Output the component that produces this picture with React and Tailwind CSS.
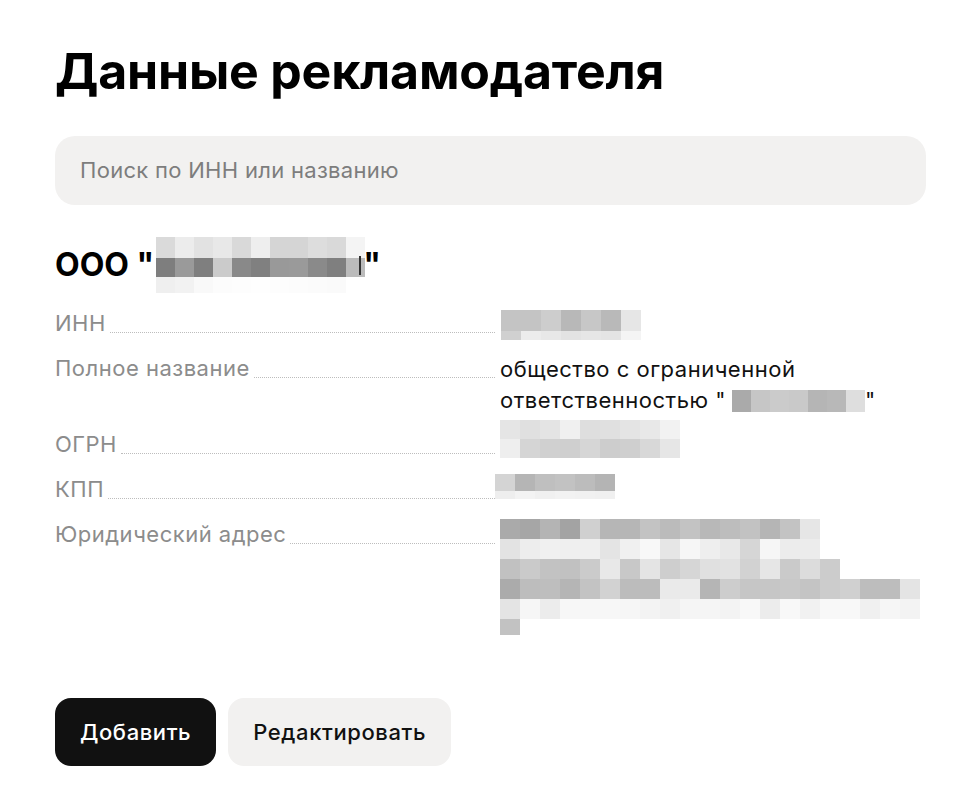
import React from 'react';

function Pixels({ rows, w = 20, className = '' }) {
  return (
    <div className={'inline-flex flex-col align-top ' + className}>
      {rows.map((r, i) => (
        <div key={i} className="flex" style={{ height: r.h }}>
          {r.c.map((c, j) => (
            <div key={j} style={{ width: w, background: c }} />
          ))}
        </div>
      ))}
    </div>
  );
}

const ooo = [
  { h: 21, c: ['#dadada', '#ececec', '#e2e2e2', '#e8e8e8', '#d9d9d9', '#eeeeee', '#d5d5d5', '#d5d5d5', '#dddddd', '#d9d9d9', '#f4f4f4'] },
  { h: 19, c: ['#7e7e7e', '#9a9a9a', '#7f7f7f', '#cbcbcb', '#898989', '#808080', '#999999', '#9a9a9a', '#8a8a8a', '#7f7f7f', '#bbbbbb'] },
  { h: 16, c: ['#efefef', '#f2f2f2', '#f9f9f9', '#fcfcfc', '#fdfdfd', '#fefefe', '#fdfdfd', '#fcfcfc', '#fbfbfb', '#fafafa', '#ffffff'] },
];

const inn = [
  { h: 21, c: ['#c4c4c4', '#c4c4c4', '#cdcdcd', '#b8b8b8', '#c7c7c7', '#b9b9b9', '#e6e6e6'] },
  { h: 9, c: ['#d0d0d0', '#ececec', '#e8e8e8', '#e3e3e3', '#e6e6e6', '#e4e4e4', '#f4f4f4'] },
];

const ogrn = [
  { h: 19, c: ['#e5e5e5', '#e0e0e0', '#e4e4e4', '#f0f0f0', '#dedede', '#e0e0e0', '#e4e4e4', '#e8e8e8', '#f2f2f2'] },
  { h: 19, c: ['#eeeeee', '#d5d5d5', '#d0d0d0', '#cfcfcf', '#d6d6d6', '#cdcdcd', '#cfcfcf', '#d8d8d8', '#e6e6e6'] },
];

const kpp = [
  { h: 17, c: ['#d4d4d4', '#b5b5b5', '#bfbfbf', '#c2c2c2', '#bcbcbc', '#b4b4b4'] },
  { h: 8, c: ['#eeeeee', '#f3f3f3', '#f0f0f0', '#f2f2f2', '#f1f1f1', '#f0f0f0'] },
];

const name = [
  { h: 22, c: ['#aaaaaa', '#c6c6c6', '#cbcbcb', '#c9c9c9', '#b5b5b5', '#b8b8b8', '#dedede'] },
];

const addr = [
  { h: 20, c: ['#aaaaaa', '#a6a6a6', '#b4b4b4', '#a3a3a3', '#d0d0d0', '#b6b6b6', '#b6b6b6', '#c3c3c3', '#bbbbbb', '#c3c3c3', '#b8b8b8', '#bdbdbd', '#c2c2c2', '#b5b5b5', '#c3c3c3', '#e6e6e6', '#ffffff', '#ffffff', '#ffffff', '#ffffff', '#ffffff'] },
  { h: 20, c: ['#e3e3e3', '#ededed', '#f0f0f0', '#efefef', '#efefef', '#e4e4e4', '#f0f0f0', '#f8f8f8', '#e6e6e6', '#f6f6f6', '#eeeeee', '#e8e8e8', '#d6d6d6', '#f6f6f6', '#ececec', '#ececec', '#ffffff', '#ffffff', '#ffffff', '#ffffff', '#ffffff'] },
  { h: 20, c: ['#c1c1c1', '#cacaca', '#c2c2c2', '#c1c1c1', '#cbcbcb', '#e8e8e8', '#c8c8c8', '#e4e4e4', '#cecece', '#d6d6d6', '#e0e0e0', '#e2e2e2', '#d2d2d2', '#e6e6e6', '#cacaca', '#dcdcdc', '#cccccc', '#ffffff', '#ffffff', '#ffffff', '#ffffff'] },
  { h: 20, c: ['#ababab', '#bdbdbd', '#bebebe', '#b5b5b5', '#c3c3c3', '#d2d2d2', '#bcbcbc', '#bcbcbc', '#eaeaea', '#eaeaea', '#b5b5b5', '#cdcdcd', '#c6c6c6', '#c6c6c6', '#c8c8c8', '#c4c4c4', '#cccccc', '#d0d0d0', '#bdbdbd', '#bdbdbd', '#e4e4e4'] },
  { h: 20, c: ['#e4e4e4', '#f6f6f6', '#ececec', '#f7f7f7', '#f7f7f7', '#f7f7f7', '#f6f6f6', '#f3f3f3', '#f0f0f0', '#f5f5f5', '#f5f5f5', '#f3f3f3', '#f8f8f8', '#ececec', '#f8f8f8', '#f1f1f1', '#f8f8f8', '#f8f8f8', '#f0f0f0', '#f6f6f6', '#f3f3f3'] },
  { h: 16, c: ['#c2c2c2'] },
];

function Row({ label, children }) {
  return (
    <div className="grid grid-cols-[445px_1fr]">
      <div className="flex items-end pr-[5px] h-[31px]">
        <span className="text-[#8c8c8c] whitespace-nowrap">{label}</span>
        <span className="flex-1 ml-[4px] mb-[7px] border-b border-dotted border-[#bdbdbd]" />
      </div>
      <div className="text-[#111] leading-[31px]">{children}</div>
    </div>
  );
}

export default function App() {
  return (
    <div className="min-h-screen bg-white pl-[55px] pr-[48px] pt-[35px] pb-10" style={{ fontFamily: 'Inter, "Noto Sans", sans-serif' }}>
      <h1 className="text-[50px] font-bold leading-[72px] text-black tracking-[-0.2px]">Данные рекламодателя</h1>

      <div className="mt-[29px] h-[69px] rounded-[20px] bg-[#f2f1f0] flex items-center px-[25px]">
        <span className="text-[22px] text-[#7d7d7d] tracking-[0.3px]">Поиск по ИНН или названию</span>
      </div>

      <div className="mt-[32px] flex items-center h-[56px]">
        <span className="text-[32px] font-bold text-black leading-none">ООО "</span>
        <Pixels rows={ooo} w={19} className="ml-[2px]" />
        <span className="w-[2px] h-[19px] bg-[#333] -ml-[6px] mr-[2px]" />
        <span className="text-[32px] font-bold text-black leading-none">"</span>
      </div>

      <div className="mt-[16px] flex flex-col gap-[14px] text-[22px] tracking-[0.5px]">
        <Row label="ИНН">
          <Pixels rows={inn} className="mt-[1px] ml-[1px]" />
        </Row>
        <Row label="Полное название">
          <div>общество с ограниченной</div>
          <div className="flex items-center">
            ответственностью "
            <Pixels rows={name} w={19} className="ml-[6px]" />
            "
          </div>
        </Row>
        <Row label="ОГРН">
          <Pixels rows={ogrn} className="-mt-[10px]" />
        </Row>
        <Row label="КПП">
          <Pixels rows={kpp} className="-mt-[1px] -ml-[5px]" />
        </Row>
        <Row label="Юридический адрес">
          <Pixels rows={addr} className="-mt-[1px]" />
        </Row>
      </div>

      <div className="mt-[63px] flex gap-[12px]">
        <button className="h-[68px] px-[25px] rounded-[16px] bg-[#111] text-white text-[22px] font-medium tracking-[0.6px]">Добавить</button>
        <button className="h-[68px] px-[25px] rounded-[16px] bg-[#f2f1f0] text-[#111] text-[22px] font-medium tracking-[0.6px]">Редактировать</button>
      </div>
    </div>
  );
}
